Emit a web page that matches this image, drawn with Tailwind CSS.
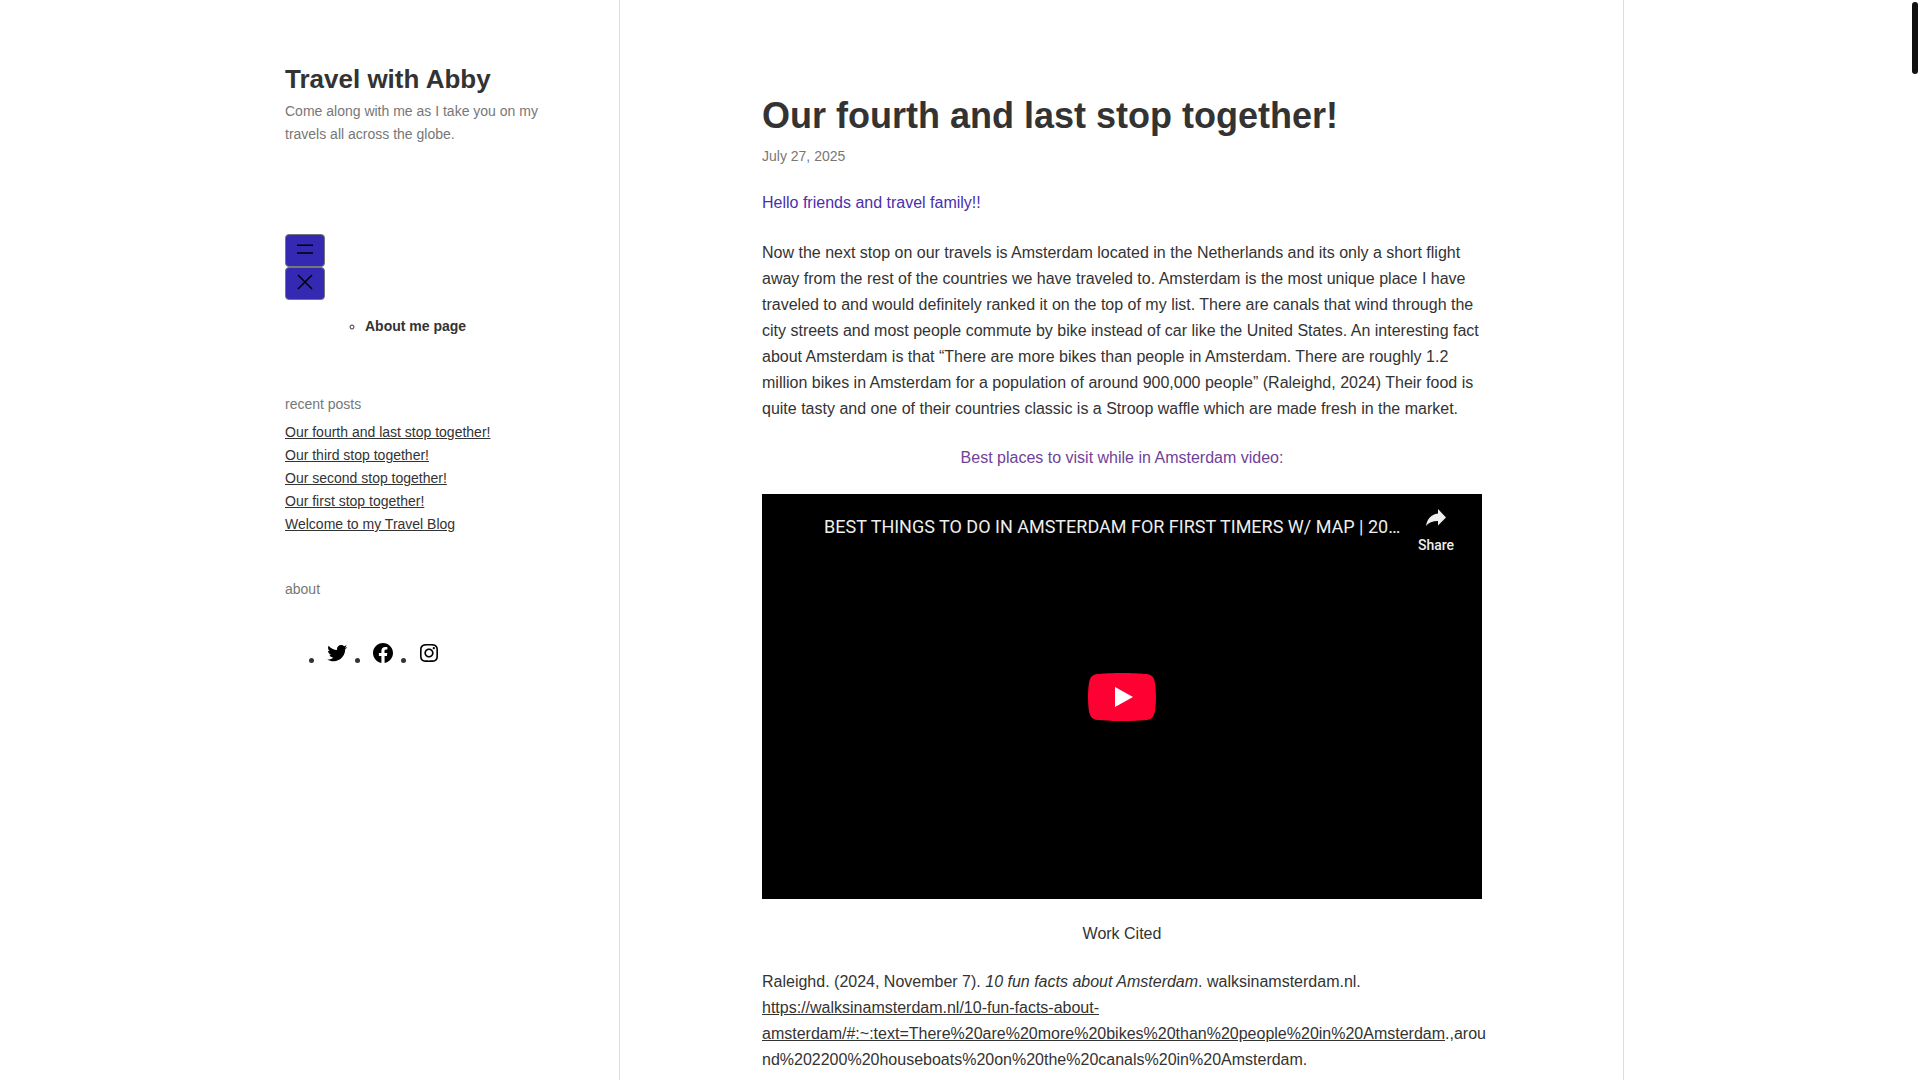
<!DOCTYPE html>
<html lang="en">
<head>
    <meta charset="UTF-8">
    <meta name="viewport" content="width=device-width, initial-scale=1.0">
    <title>Our fourth and last stop together! – Travel with Abby</title>
    <script src="https://cdn.jsdelivr.net/npm/@tailwindcss/browser@4"></script>
</head>
<body class="bg-white font-['Liberation_Sans',Arial,sans-serif] text-[#333]">

    <div class="mx-auto flex min-h-screen max-w-[1350px]">
        <!-- Sidebar -->
        <aside class="w-[334px] shrink-0 pt-16 text-sm leading-[23px]">
            <header class="pr-16">
                <a href="#" class="block text-[26px] leading-[30px] font-bold">Travel with Abby</a>
                <p class="mt-[6px] text-[#777]">Come along with me as I take you on my travels all across the globe.</p>
            </header>

            <nav class="mt-[88px]">
                <button type="button" aria-label="Open menu" class="flex h-[33px] w-10 justify-center rounded border border-[#777] bg-[#3429b2] pt-[2px] text-black">
                    <svg class="size-6" viewBox="0 0 24 24" fill="none" stroke="currentColor" stroke-width="1.5"><path d="M4 8.200h16M4 16h16"></path></svg>
                </button>
                <button type="button" aria-label="Close menu" class="flex h-[33px] w-10 justify-center rounded border border-[#777] bg-[#3429b2] pt-[2px] text-black">
                    <svg class="size-6" viewBox="0 0 24 24" fill="currentColor"><path d="m13.06 12 6.47-6.47-1.06-1.06L12 10.94 5.53 4.47 4.47 5.53 10.94 12l-6.47 6.47 1.06 1.06L12 13.06l6.47 6.47 1.06-1.06L13.06 12Z"></path></svg>
                </button>
                <ul class="mt-[15px] list-[circle] pl-20">
                    <li><a href="#" class="font-bold">About me page</a></li>
                </ul>
            </nav>

            <section class="mt-[55px]">
                <h2 class="text-[#777]">recent posts</h2>
                <ul class="mt-[5px]">
                    <li><a href="#" class="underline">Our fourth and last stop together!</a></li>
                    <li><a href="#" class="underline">Our third stop together!</a></li>
                    <li><a href="#" class="underline">Our second stop together!</a></li>
                    <li><a href="#" class="underline">Our first stop together!</a></li>
                    <li><a href="#" class="underline">Welcome to my Travel Blog</a></li>
                </ul>
            </section>

            <section class="mt-[42px]">
                <h2 class="text-[#777]">about</h2>
                <ul class="mt-10 flex gap-[22px] pl-10 leading-6">
                    <li class="flex items-center">
                        <span class="mt-[14px] -ml-4 mr-[11px] size-[5px] rounded-full bg-[#333]"></span>
                        <a href="#" aria-label="Twitter"><svg class="size-6" viewBox="0 0 24 24"><path d="M22.23,5.924c-0.736,0.326-1.527,0.547-2.357,0.646c0.847-0.508,1.498-1.312,1.804-2.27 c-0.793,0.47-1.671,0.812-2.606,0.996C18.324,4.498,17.257,4,16.077,4c-2.266,0-4.103,1.837-4.103,4.103 c0,0.322,0.036,0.635,0.106,0.935C8.67,8.867,5.647,7.234,3.623,4.751C3.27,5.357,3.067,6.062,3.067,6.814 c0,1.424,0.724,2.679,1.825,3.415c-0.673-0.021-1.305-0.206-1.859-0.513c0,0.017,0,0.034,0,0.052c0,1.988,1.414,3.647,3.292,4.023 c-0.344,0.094-0.707,0.144-1.081,0.144c-0.264,0-0.521-0.026-0.772-0.074c0.522,1.63,2.038,2.816,3.833,2.85 c-1.404,1.1-3.174,1.756-5.096,1.756c-0.331,0-0.658-0.019-0.979-0.057c1.816,1.164,3.973,1.843,6.29,1.843 c7.547,0,11.675-6.252,11.675-11.675c0-0.178-0.004-0.355-0.012-0.531C20.985,7.47,21.68,6.747,22.23,5.924z"></path></svg></a>
                    </li>
                    <li class="flex items-center">
                        <span class="mt-[14px] -ml-4 mr-[11px] size-[5px] rounded-full bg-[#333]"></span>
                        <a href="#" aria-label="Facebook"><svg class="size-6" viewBox="0 0 24 24"><path d="M12 2C6.5 2 2 6.5 2 12c0 5 3.7 9.1 8.4 9.9v-7H7.9V12h2.5V9.8c0-2.5 1.5-3.9 3.8-3.9 1.1 0 2.2.2 2.2.2v2.5h-1.3c-1.2 0-1.6.8-1.6 1.6V12h2.8l-.4 2.9h-2.3v7C18.3 21.1 22 17 22 12c0-5.500-4.500-10-10-10z"></path></svg></a>
                    </li>
                    <li class="flex items-center">
                        <span class="mt-[14px] -ml-4 mr-[11px] size-[5px] rounded-full bg-[#333]"></span>
                        <a href="#" aria-label="Instagram"><svg class="size-6" viewBox="0 0 24 24"><path d="M12,4.622c2.403,0,2.688,0.009,3.637,0.052c0.877,0.040,1.354,0.187,1.671,0.310c0.420,0.163,0.720,0.358,1.035,0.673 c0.315,0.315,0.510,0.615,0.673,1.035c0.123,0.317,0.270,0.794,0.310,1.671c0.043,0.949,0.052,1.234,0.052,3.637 s-0.009,2.688-0.052,3.637c-0.040,0.877-0.187,1.354-0.310,1.671c-0.163,0.420-0.358,0.720-0.673,1.035 c-0.315,0.315-0.615,0.510-1.035,0.673c-0.317,0.123-0.794,0.270-1.671,0.310c-0.949,0.043-1.233,0.052-3.637,0.052 s-2.688-0.009-3.637-0.052c-0.877-0.040-1.354-0.187-1.671-0.310c-0.420-0.163-0.720-0.358-1.035-0.673 c-0.315-0.315-0.510-0.615-0.673-1.035c-0.123-0.317-0.270-0.794-0.310-1.671C4.631,14.688,4.622,14.403,4.622,12 s0.009-2.688,0.052-3.637c0.040-0.877,0.187-1.354,0.310-1.671c0.163-0.420,0.358-0.720,0.673-1.035 c0.315-0.315,0.615-0.510,1.035-0.673c0.317-0.123,0.794-0.270,1.671-0.310C9.312,4.631,9.597,4.622,12,4.622 M12,3 C9.556,3,9.249,3.010,8.289,3.054C7.331,3.098,6.677,3.250,6.105,3.472C5.513,3.702,5.011,4.010,4.511,4.511 c-0.500,0.500-0.808,1.002-1.038,1.594C3.250,6.677,3.098,7.331,3.054,8.289C3.010,9.249,3,9.556,3,12c0,2.444,0.010,2.751,0.054,3.711 c0.044,0.958,0.196,1.612,0.418,2.185c0.230,0.592,0.538,1.094,1.038,1.594c0.500,0.500,1.002,0.808,1.594,1.038 c0.572,0.222,1.227,0.375,2.185,0.418C9.249,20.990,9.556,21,12,21s2.751-0.010,3.711-0.054c0.958-0.044,1.612-0.196,2.185-0.418 c0.592-0.230,1.094-0.538,1.594-1.038c0.500-0.500,0.808-1.002,1.038-1.594c0.222-0.572,0.375-1.227,0.418-2.185 C20.990,14.751,21,14.444,21,12s-0.010-2.751-0.054-3.711c-0.044-0.958-0.196-1.612-0.418-2.185c-0.230-0.592-0.538-1.094-1.038-1.594 c-0.500-0.500-1.002-0.808-1.594-1.038c-0.572-0.222-1.227-0.375-2.185-0.418C14.751,3.010,14.444,3,12,3L12,3z M12,7.378 c-2.552,0-4.622,2.069-4.622,4.622S9.448,16.622,12,16.622s4.622-2.069,4.622-4.622S14.552,7.378,12,7.378z M12,15 c-1.657,0-3-1.343-3-3s1.343-3,3-3s3,1.343,3,3S13.657,15,12,15z M16.804,6.116c-0.596,0-1.080,0.484-1.080,1.080 s0.484,1.080,1.080,1.080c0.596,0,1.080-0.484,1.080-1.080S17.401,6.116,16.804,6.116z"></path></svg></a>
                    </li>
                </ul>
            </section>
        </aside>

        <!-- Post -->
        <main class="mr-[11px] flex-1 border-x border-[#ddd] pt-[95px] pl-[142px]">
            <article class="max-w-[720px] leading-[26px]">
                <h1 class="text-4xl leading-[42px] font-bold">Our fourth and last stop together!</h1>
                <p class="mt-2 text-sm leading-[23px] text-[#777]"><time datetime="2025-07-27">July 27, 2025</time></p>
                <p class="mt-[22px] text-[#4930ad]">Hello friends and travel family!!</p>
                <p class="mt-6">Now the next stop on our travels is Amsterdam located in the Netherlands and its only a short flight away from the rest of the countries we have traveled to. Amsterdam is the most unique place I have traveled to and would definitely ranked it on the top of my list. There are canals that wind through the city streets and most people commute by bike instead of car like the United States. An interesting fact about Amsterdam is that “There are more bikes than people in Amsterdam. There are roughly 1.2 million bikes in Amsterdam for a population of around 900,000 people” (Raleighd, 2024) Their food is quite tasty and one of their countries classic is a Stroop waffle which are made fresh in the market.</p>
                <p class="mt-[23px] text-center text-[#6f4298]">Best places to visit while in Amsterdam video:</p>

                <!-- Video embed -->
                <div class="relative mt-[23px] h-[405px] bg-black font-[Roboto,sans-serif] text-[#eee]">
                    <div class="flex justify-between pt-[14px] pr-[23px] pl-[62px]">
                        <a href="#" class="mt-1 text-lg leading-[30px] whitespace-nowrap">BEST THINGS TO DO IN AMSTERDAM FOR FIRST TIMERS W/ MAP | 20…</a>
                        <button type="button" class="flex w-[46px] flex-col items-center text-sm leading-5 font-medium">
                            <svg class="h-5 w-[22px]" viewBox="0 0 22 20" fill="currentColor"><path d="M13 1 21 9.500 13 17.500V13C7.500 13 3.500 14.500 1 18 2 11.500 5.500 6.500 13 5.500z"></path></svg>
                            <span class="mt-[7px]">Share</span>
                        </button>
                    </div>
                    <button type="button" aria-label="Play" class="absolute inset-0 m-auto h-12 w-[68px]">
                        <svg viewBox="0 0 68 48"><path fill="#f03" d="M66.52 7.740c-.78-2.930-2.490-5.410-5.420-6.190C55.790.13 34 0 34 0S12.210.13 6.900 1.550c-2.930.78-4.630 3.260-5.420 6.190C.06 13.050 0 24 0 24s.06 10.950 1.480 16.260c.78 2.930 2.490 5.410 5.420 6.190C12.210 47.870 34 48 34 48s21.790-.13 27.100-1.550c2.930-.78 4.640-3.260 5.420-6.190C67.940 34.950 68 24 68 24s-.06-10.950-1.480-16.260z"></path><path fill="#fff" d="M45 24 27 14v20"></path></svg>
                    </button>
                </div>

                <p class="mt-[22px] text-center">Work Cited</p>
                <p class="mt-[22px] -mr-2 wrap-break-word">Raleighd. (2024, November 7). <em>10 fun facts about Amsterdam</em>. walksinamsterdam.nl. <a href="#" class="underline">https://walksinamsterdam.nl/10-fun-facts-about-amsterdam/#:~:text=There%20are%20more%20bikes%20than%20people%20in%20Amsterdam</a>.,around%202200%20houseboats%20on%20the%20canals%20in%20Amsterdam.</p>
            </article>
        </main>
    </div>

    <!-- Scroll position marker -->
    <div class="fixed top-[2px] right-[2px] h-[72px] w-[6px] rounded-full bg-[#111]"></div>

</body>
</html>
